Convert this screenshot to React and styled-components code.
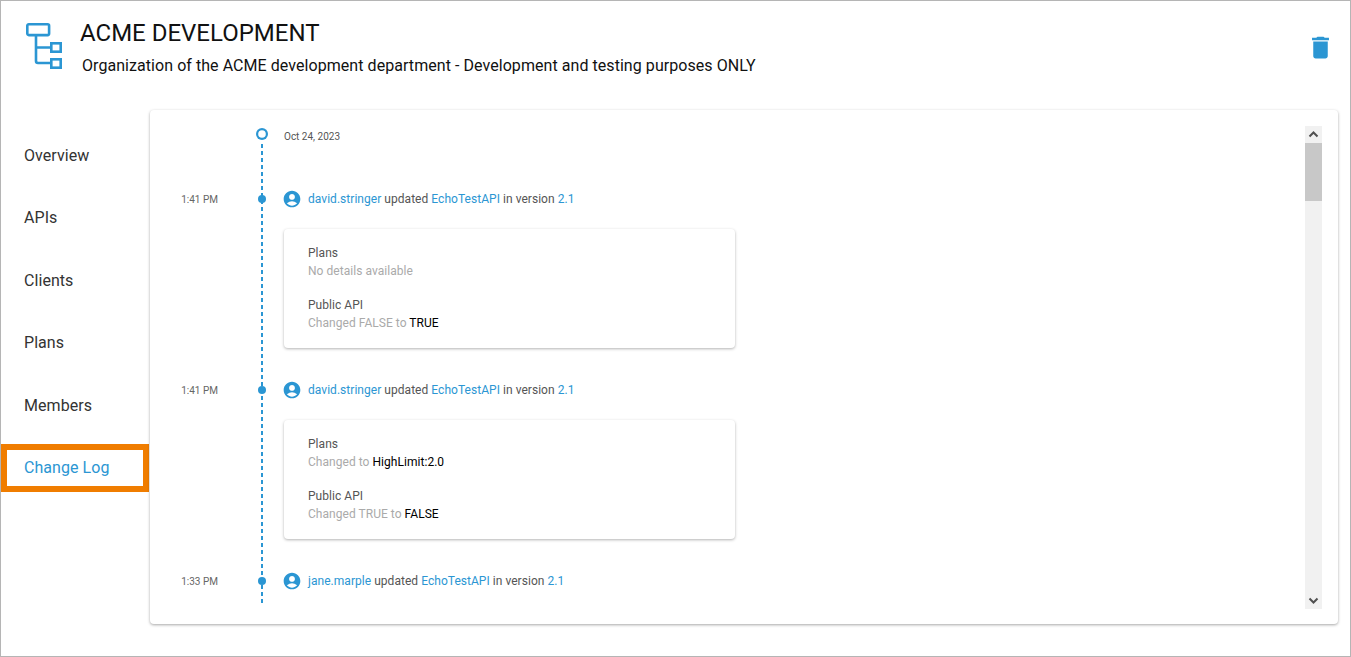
import React from "react";
import styled, { createGlobalStyle } from "styled-components";
import { MdAccountCircle, MdDelete } from "react-icons/md";

const BLUE = "#2b96d3";

const GlobalStyle = createGlobalStyle`
	html, body {
		margin: 0;
		padding: 0;
		background: #fff;
	}
	* {
		box-sizing: border-box;
	}
	body {
		font-family: Roboto, "Liberation Sans", sans-serif;
	}
`;

const Frame = styled.div`
	width: 1351px;
	height: 657px;
	border: 1px solid #b5b5b5;
	overflow: hidden;
`;

const Header = styled.header`
	height: 109px;
	display: flex;
	align-items: flex-start;
	padding: 21px 0 0 24px;
`;

const OrgIcon = styled.svg`
	width: 40px;
	height: 50px;
	flex: none;
	fill: none;
	stroke: ${BLUE};
	stroke-width: 2.6;
`;

const HeaderText = styled.div`
	margin-left: 15px;
	flex: 1;
`;

const Title = styled.h1`
	margin: 0;
	font-size: 24px;
	line-height: 22px;
	font-weight: 400;
	color: #111;
`;

const Subtitle = styled.p`
	margin: 11px 0 0 2px;
	font-size: 16px;
	line-height: 22px;
	letter-spacing: 0.057px;
	color: #111;
`;

const TrashButton = styled.div`
	color: ${BLUE};
	margin: 11px 15px 0 0;
	line-height: 0;
	svg {
		font-size: 29px;
	}
`;

const Main = styled.div`
	display: flex;
	align-items: flex-start;
`;

const Sidebar = styled.nav`
	width: 148px;
	flex: none;
	padding-top: 21.6px;
	display: flex;
	flex-direction: column;
	gap: 14.4px;
`;

const NavItem = styled.div`
	height: 48px;
	padding-left: 17px;
	display: flex;
	align-items: center;
	font-size: 16px;
	letter-spacing: 0.06px;
	border: 6px solid ${(p) => (p.$active ? "#f07d00" : "transparent")};
	color: ${(p) => (p.$active ? BLUE : "#333")};
`;

const Panel = styled.section`
	width: 1188px;
	height: 514px;
	margin-left: 1px;
	padding: 16px 16px 0 0;
	display: flex;
	align-items: flex-start;
	background: #fff;
	border-radius: 4px;
	box-shadow: 0 1px 3px rgba(0, 0, 0, 0.35);
`;

const Feed = styled.div`
	flex: 1;
	position: relative;
	&::before {
		content: "";
		position: absolute;
		left: 111px;
		top: 18px;
		bottom: 0;
		width: 2px;
		background: repeating-linear-gradient(${BLUE} 0 4px, transparent 4px 7px);
	}
`;

const Row = styled.div`
	display: grid;
	grid-template-columns: 104px 16px 1fr;
	padding-bottom: ${(p) => p.$bottom}px;
`;

const Time = styled.div`
	padding: 1px 36px 0 0;
	text-align: right;
	font-size: 10px;
	line-height: 28px;
	color: #666;
`;

const Rail = styled.div`
	height: ${(p) => p.$height}px;
	display: flex;
	justify-content: center;
	align-items: ${(p) => (p.$top ? "flex-start" : "center")};
	position: relative;
`;

const StartMark = styled.div`
	width: 12px;
	height: 12px;
	margin-top: 2px;
	border-radius: 50%;
	background: #fff;
	box-shadow: inset 0 0 0 2.2px ${BLUE};
`;

const Dot = styled.div`
	width: 8px;
	height: 8px;
	border-radius: 50%;
	background: ${BLUE};
`;

const Body = styled.div`
	padding-left: 14px;
`;

const DateLabel = styled.div`
	font-size: 10px;
	line-height: 22px;
	color: #555;
`;

const Headline = styled.div`
	height: 28px;
	display: flex;
	align-items: center;
	font-size: 12px;
	letter-spacing: 0.04px;
	color: #555;
	white-space: pre;
	svg {
		font-size: 20px;
		color: ${BLUE};
		margin: 0 6px 0 -2px;
		flex: none;
	}
`;

const Link = styled.span`
	color: ${BLUE};
`;

const Card = styled.div`
	width: 451px;
	height: 119px;
	margin-top: 16px;
	padding: 15px 24px 0;
	border-radius: 4px;
	background: #fff;
	box-shadow: 0 1px 3px rgba(0, 0, 0, 0.3);
	display: flex;
	flex-direction: column;
	gap: 16px;
	font-size: 12px;
	line-height: 18px;
	letter-spacing: 0.04px;
`;

const Label = styled.div`
	color: #555;
`;

const Detail = styled.div`
	color: #aaa;
`;

const Value = styled.span`
	color: #000;
`;

const Scrollbar = styled.div`
	width: 17px;
	height: 483px;
	flex: none;
	display: flex;
	flex-direction: column;
	background: #f1f1f1;
`;

const ScrollArrow = styled.svg`
	width: 17px;
	height: 17px;
	flex: none;
	fill: none;
	stroke: #505050;
	stroke-width: 2;
`;

const ScrollThumb = styled.div`
	height: 58px;
	background: #c8c8c8;
`;

const ScrollSpace = styled.div`
	flex: 1;
`;

const navItems = ["Overview", "APIs", "Clients", "Plans", "Members", "Change Log"];

const entries = [
	{
		time: "1:41 PM",
		user: "david.stringer",
		sections: [
			{ label: "Plans", text: "No details available" },
			{ label: "Public API", text: "Changed FALSE to ", value: "TRUE" },
		],
	},
	{
		time: "1:41 PM",
		user: "david.stringer",
		sections: [
			{ label: "Plans", text: "Changed to ", value: "HighLimit:2.0" },
			{ label: "Public API", text: "Changed TRUE to ", value: "FALSE" },
		],
	},
	{ time: "1:33 PM", user: "jane.marple" },
];

const App = () => {
	return (
		<Frame>
			<GlobalStyle />
			<Header>
				<OrgIcon viewBox="0 0 40 50">
					<rect x="2.3" y="2.3" width="21.8" height="10.8" rx="1.5" />
					<rect x="26.3" y="21.3" width="9.4" height="8.4" />
					<rect x="26.3" y="37.3" width="9.4" height="8.4" />
					<path d="M11 14v25a2 2 0 0 0 2 2h13M11 25.5h15" />
				</OrgIcon>
				<HeaderText>
					<Title>ACME DEVELOPMENT</Title>
					<Subtitle>
						Organization of the ACME development department - Development and testing purposes ONLY
					</Subtitle>
				</HeaderText>
				<TrashButton>
					<MdDelete />
				</TrashButton>
			</Header>
			<Main>
				<Sidebar>
					{navItems.map((item) => (
						<NavItem key={item} $active={item === "Change Log"}>
							{item}
						</NavItem>
					))}
				</Sidebar>
				<Panel>
					<Feed>
						<Row $bottom={0}>
							<Time />
							<Rail $height={59} $top>
								<StartMark />
							</Rail>
							<Body>
								<DateLabel>Oct 24, 2023</DateLabel>
							</Body>
						</Row>
						{entries.map((entry, i) => (
							<Row key={i} $bottom={entry.sections ? 28 : 10}>
								<Time>{entry.time}</Time>
								<Rail $height={28}>
									<Dot />
								</Rail>
								<Body>
									<Headline>
										<MdAccountCircle />
										<Link>{entry.user}</Link> updated <Link>EchoTestAPI</Link> in version <Link>2.1</Link>
									</Headline>
									{entry.sections && (
										<Card>
											{entry.sections.map((s) => (
												<div key={s.label}>
													<Label>{s.label}</Label>
													<Detail>
														{s.text}
														{s.value && <Value>{s.value}</Value>}
													</Detail>
												</div>
											))}
										</Card>
									)}
								</Body>
							</Row>
						))}
					</Feed>
					<Scrollbar>
						<ScrollArrow viewBox="0 0 17 17">
							<path d="M4.5 10.5l4-4 4 4" />
						</ScrollArrow>
						<ScrollThumb />
						<ScrollSpace />
						<ScrollArrow viewBox="0 0 17 17">
							<path d="M4.5 6.5l4 4 4-4" />
						</ScrollArrow>
					</Scrollbar>
				</Panel>
			</Main>
		</Frame>
	);
};

export default App;
